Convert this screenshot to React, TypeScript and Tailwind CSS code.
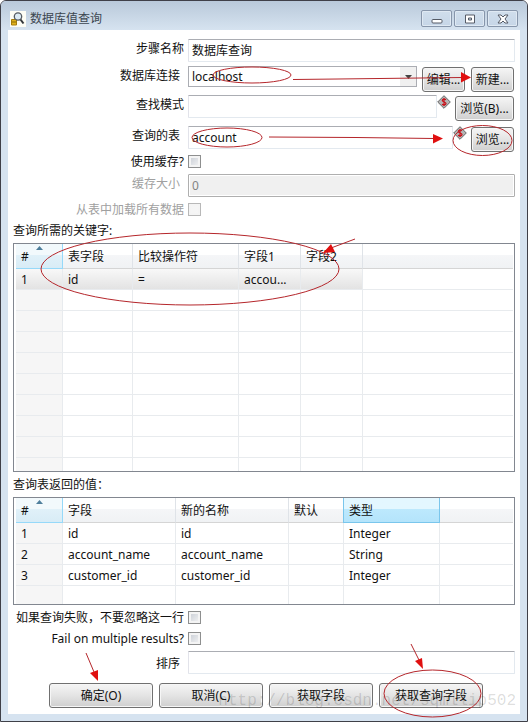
import type { ReactNode } from "react"

interface Column {
  label: string
  width?: string
  active?: boolean
}

const inputClass =
  "h-[23px] min-w-0 flex-1 rounded-[1px] border border-[#e3e9ef] border-t-[#abadb3] border-l-[#e2e3ea] bg-white px-[3px] pb-px leading-[20px] outline-none"

function Field({ label, id, inset, end, children }: { label: string; id: string; inset?: boolean; end?: boolean; children: ReactNode }) {
  return (
    <div className={`flex gap-1 ${end ? "items-end" : "items-start"}`}>
      <label htmlFor={id} className={`w-44 shrink-0 text-right leading-[20px] ${inset ? "pr-1" : ""}`}>
        {label}
      </label>
      {children}
    </div>
  )
}

function CheckRow({ label, id, disabled }: { label: string; id: string; disabled?: boolean }) {
  return (
    <div className="flex h-[13px] items-center gap-1">
      <label htmlFor={id} className={`w-44 shrink-0 text-right whitespace-nowrap ${disabled ? "text-[#a0a0a0]" : ""}`}>
        {label}
      </label>
      <input
        id={id}
        type="checkbox"
        disabled={disabled}
        className="size-[13px] appearance-none border border-[#8e8f8f] bg-linear-to-br from-[#c6cbd3] to-[#f6f6f6] shadow-[inset_0_0_0_2px_#f4f4f4] checked:bg-[#4b6e9f] disabled:border-[#b8b8b8] disabled:from-[#f4f4f4]"
      />
    </div>
  )
}

function PushButton({ className, children }: { className: string; children: ReactNode }) {
  return (
    <button
      type="button"
      className={`h-[25px] rounded-[3px] border border-[#707070] bg-linear-to-b from-[#f2f2f2] from-10% via-[#e4e4e4] to-[#cfcfcf] pt-px text-center whitespace-nowrap shadow-[inset_0_0_0_1px_#f6f6f6] ${className}`}
    >
      {children}
    </button>
  )
}

function VariableIcon() {
  return (
    <svg width="14" height="14" viewBox="0 0 14 14" className="shrink-0" aria-hidden="true">
      <path d="M7 .7 13.3 7 7 13.3 .7 7Z" fill="#b4b4b4" stroke="#666" />
      <path d="M9 4.7C7.7 3.8 5.3 4 5.3 5.5S9 7 9 8.5 6.3 10.2 5 9.3M7 3v8" fill="none" stroke="#c8141c" strokeWidth="1.3" />
    </svg>
  )
}

function DataTable({ columns, rows, total, selected, height }: { columns: Column[]; rows: string[][]; total: number; selected?: number; height: string }) {
  const lines = Array.from({ length: total }, (_, i) => rows[i] ?? [])
  return (
    <div className={`mt-[3px] overflow-hidden border border-[#828790] bg-white pr-px pl-[2px] ${height}`}>
      <table className="w-full table-fixed border-separate border-spacing-0">
        <thead>
          <tr className="h-[25px]">
            {columns.map((c, i) => (
              <th
                key={i}
                className={`relative border-r border-b pt-[2px] pl-[5px] text-left font-normal whitespace-nowrap ${c.width ?? ""} ${
                  i === 0
                    ? "border-[#96d9f9] bg-linear-to-b from-[#f2f9fc] from-45% via-[#e1f1f9] via-45% to-[#d8ecf6]"
                    : c.active
                      ? "border-[#7ac6ec] bg-linear-to-b from-[#e3f7ff] from-45% via-[#bde9fd] via-45% to-[#b4e4fb] shadow-[-1px_0_0_#7ac6ec]"
                      : "border-[#d5d5d5] border-r-[#dfe3e8] bg-linear-to-b from-white from-45% via-[#f5f6f8] via-45% to-[#f0f2f4] last:border-r-0"
                }`}
              >
                {c.label}
                {i === 0 && (
                  <svg width="7" height="4" className="absolute top-[2px] left-5" aria-hidden="true">
                    <path d="M0 4 3.5 0 7 4Z" fill="#4f7f9c" />
                  </svg>
                )}
              </th>
            ))}
          </tr>
        </thead>
        <tbody>
          {lines.map((row, r) => (
            <tr key={r} className={`h-[21px] ${r === selected ? "bg-linear-to-b from-[#f8f8f8] to-[#e2e2e2]" : ""}`}>
              {columns.map((c, i) => (
                <td
                  key={i}
                  className={`overflow-hidden border-r border-b border-[#e8ebee] pt-[2px] pl-[5px] whitespace-nowrap last:border-r-0 ${
                    r === selected ? "last:bg-white" : i === 0 ? "bg-[#f6f6f6]" : ""
                  }`}
                >
                  {row[i]}
                </td>
              ))}
            </tr>
          ))}
        </tbody>
      </table>
    </div>
  )
}

const keyColumns: Column[] = [
  { label: "#", width: "w-[47px]" },
  { label: "表字段", width: "w-[70px]" },
  { label: "比较操作符", width: "w-[106px]" },
  { label: "字段1", width: "w-[62px]" },
  { label: "字段2", width: "w-[62px]" },
  { label: "" },
]

const valueColumns: Column[] = [
  { label: "#", width: "w-[47px]" },
  { label: "字段", width: "w-[113px]" },
  { label: "新的名称", width: "w-[113px]" },
  { label: "默认", width: "w-[55px]" },
  { label: "类型", width: "w-[96px]", active: true },
  { label: "" },
]

const captionClass =
  "flex h-[17px] w-[31px] items-center justify-center rounded-[2px] border border-[#8796ab] bg-linear-to-b from-[#d0deec] to-[#c6d6e7] shadow-[inset_0_0_0_1px_#dfe9f3]"

function TitleBar() {
  return (
    <header className="flex h-[29px] items-center bg-linear-to-b from-[#b9c9da] to-[#d6e3f0] px-[9px] pt-[6px] text-[#3c4650]">
      <svg width="16" height="16" viewBox="0 0 16 16" aria-hidden="true">
        <path d="M0 0h16v16H0Z" fill="#fdfdf5" />
        <path d="M1.500 8.500h5V14h-5Z" fill="#e0b21c" stroke="#a47c0c" />
        <path d="M2 11h4" stroke="#8a6a08" />
        <circle cx="8" cy="5.500" r="3.700" fill="#dcebf4" stroke="#555b62" strokeWidth="1.300" />
        <path d="m10.500 8.500 3 4" stroke="#34383c" strokeWidth="2" />
      </svg>
      <h1 className="ml-1 flex-1">数据库值查询</h1>
      <div className="flex gap-[2px]">
        <button type="button" aria-label="最小化" className={captionClass}>
          <svg width="12" height="10" viewBox="0 0 12 10">
            <rect x="1" y="5.500" width="10" height="3.500" rx="1" fill="#fff" stroke="#555b66" />
          </svg>
        </button>
        <button type="button" aria-label="最大化" className={captionClass}>
          <svg width="12" height="10" viewBox="0 0 12 10">
            <path d="M1.500 1h9v8h-9ZM4.500 4v2h3V4Z" fill="#fff" fillRule="evenodd" stroke="#555b66" />
          </svg>
        </button>
        <button type="button" aria-label="关闭" className={captionClass}>
          <svg width="12" height="10" viewBox="0 0 12 10">
            <path d="M1 1h3l2 2 2-2h3L8 5l3 4H8L6 7 4 9H1l3-4Z" fill="#fff" stroke="#555b66" />
          </svg>
        </button>
      </div>
    </header>
  )
}

// red pen marks laid over the dialog
function Annotations() {
  return (
    <svg className="pointer-events-none absolute inset-0 size-full" fill="none" stroke="#b5262b" aria-hidden="true">
      <g transform="translate(-1 -1)">
        <ellipse cx="252" cy="75" rx="39" ry="8" />
        <path d="m293 79.500 45-.5 124-1.500" />
        <ellipse cx="227" cy="137.500" rx="35" ry="9.500" />
        <path d="m269 137 87 .5 78 1" />
        <ellipse cx="482.500" cy="140.500" rx="29.500" ry="15" />
        <ellipse cx="190" cy="269" rx="149" ry="36" />
        <path d="m355 239-24 9M86 653l8 19M411 644l8 16" />
        <ellipse cx="432.500" cy="693.500" rx="48.500" ry="23.500" />
        <path
          d="m461 72 10 5.500-10 5ZM433 134l10 4.500-10 5ZM323 253l8-9 4 8ZM98 681l-8-8 8-3ZM423 669l-8-8 7-3Z"
          fill="#e01010"
          stroke="none"
        />
      </g>
    </svg>
  )
}

export default function App() {
  return (
    <div className="relative overflow-hidden rounded-t-md border border-[#3f4048] bg-[#d6e3f0] font-['Noto_Sans','Noto_Sans_CJK_SC',sans-serif] text-[12px] leading-[18px] text-[#111]">
      <TitleBar />
      <main className="mx-[7px] mb-[7px] bg-white px-[5px] pt-[9px] pb-[6px]">
        <form className="flex flex-col" onSubmit={(e) => e.preventDefault()}>
          <div className="-ml-[5px] flex flex-col">
            <Field label="步骤名称" id="step">
              <input id="step" className={inputClass} defaultValue="数据库查询" />
            </Field>
            <div className="mt-1">
              <Field label="数据库连接" id="connection" inset>
                <div className="relative flex min-w-0 flex-1">
                  <select id="connection" className="h-[21px] w-full appearance-none border border-[#abadb3] bg-white px-[3px] outline-none">
                    <option>localhost</option>
                  </select>
                  <span className="pointer-events-none absolute inset-y-px right-px flex w-4 items-center justify-center bg-[#f0f0f0]">
                    <svg width="7" height="4" aria-hidden="true">
                      <path d="M0 0h7L3.5 4Z" fill="#444" />
                    </svg>
                  </span>
                </div>
                <PushButton className="mt-px ml-px w-[43px]">编辑...</PushButton>
                <PushButton className="mt-px mr-px ml-[2px] w-[43px]">新建...</PushButton>
              </Field>
            </div>
            <div className="mt-[3px]">
              <Field label="查找模式" id="schema">
                <div className="flex min-w-0 flex-1 items-start">
                  <input id="schema" className={inputClass} />
                  <VariableIcon />
                </div>
                <PushButton className="mt-px mr-px w-[59px]">浏览(B)...</PushButton>
              </Field>
            </div>
            <div className="mt-[5px]">
              <Field label="查询的表" id="table" inset>
                <div className="flex min-w-0 flex-1 items-start">
                  <input id="table" className={inputClass} defaultValue="account" />
                  <VariableIcon />
                </div>
                <PushButton className="mt-px mr-px w-[43px]">浏览...</PushButton>
              </Field>
            </div>
            <div className="mt-[3px]">
              <CheckRow label="使用缓存?" id="cache" />
            </div>
            <div className="mt-[6px] text-[#a0a0a0]">
              <Field label="缓存大小" id="size" inset>
                <input id="size" disabled defaultValue="0" className="h-[23px] min-w-0 flex-1 rounded-[1px] border border-[#afafaf] bg-[#f0f0f0] px-[3px] text-[#838383] shadow-[inset_0_0_0_1px_#fff]" />
              </Field>
            </div>
            <div className="mt-[6px]">
              <CheckRow label="从表中加载所有数据" id="load-all" disabled />
            </div>
          </div>

          <h2 className="mt-[6px]">查询所需的关键字:</h2>
          <DataTable columns={keyColumns} rows={[["1", "id", "=", "accou..."]]} total={10} selected={0} height="h-[229px]" />

          <h2 className="mt-1">查询表返回的值：</h2>
          <DataTable
            columns={valueColumns}
            rows={[
              ["1", "id", "id", "", "Integer"],
              ["2", "account_name", "account_name", "", "String"],
              ["3", "customer_id", "customer_id", "", "Integer"],
            ]}
            total={4}
            height="h-[108px]"
          />

          <div className="mt-[6px] -ml-[5px] flex flex-col">
            <CheckRow label="如果查询失败，不要忽略这一行" id="fail-skip" />
            <div className="mt-2">
              <CheckRow label="Fail on multiple results?" id="fail-multiple" />
            </div>
            <div className="mt-[6px]">
              <Field label="排序" id="order" inset end>
                <input id="order" className={inputClass} />
              </Field>
            </div>
          </div>

          <footer className="mt-[9px] flex justify-center gap-[6px] pl-1">
            <PushButton className="w-[104px]">确定(O)</PushButton>
            <PushButton className="w-[104px]">取消(C)</PushButton>
            <PushButton className="w-[104px]">获取字段</PushButton>
            <PushButton className="w-[104px]">获取查询字段</PushButton>
          </footer>
        </form>
      </main>
      <p className="pointer-events-none absolute right-[11px] bottom-2 font-['Liberation_Mono',monospace] text-[16px] leading-[24px] text-black/15">
        http://blog.csdn.net/sqmllip502
      </p>
      <Annotations />
    </div>
  )
}
